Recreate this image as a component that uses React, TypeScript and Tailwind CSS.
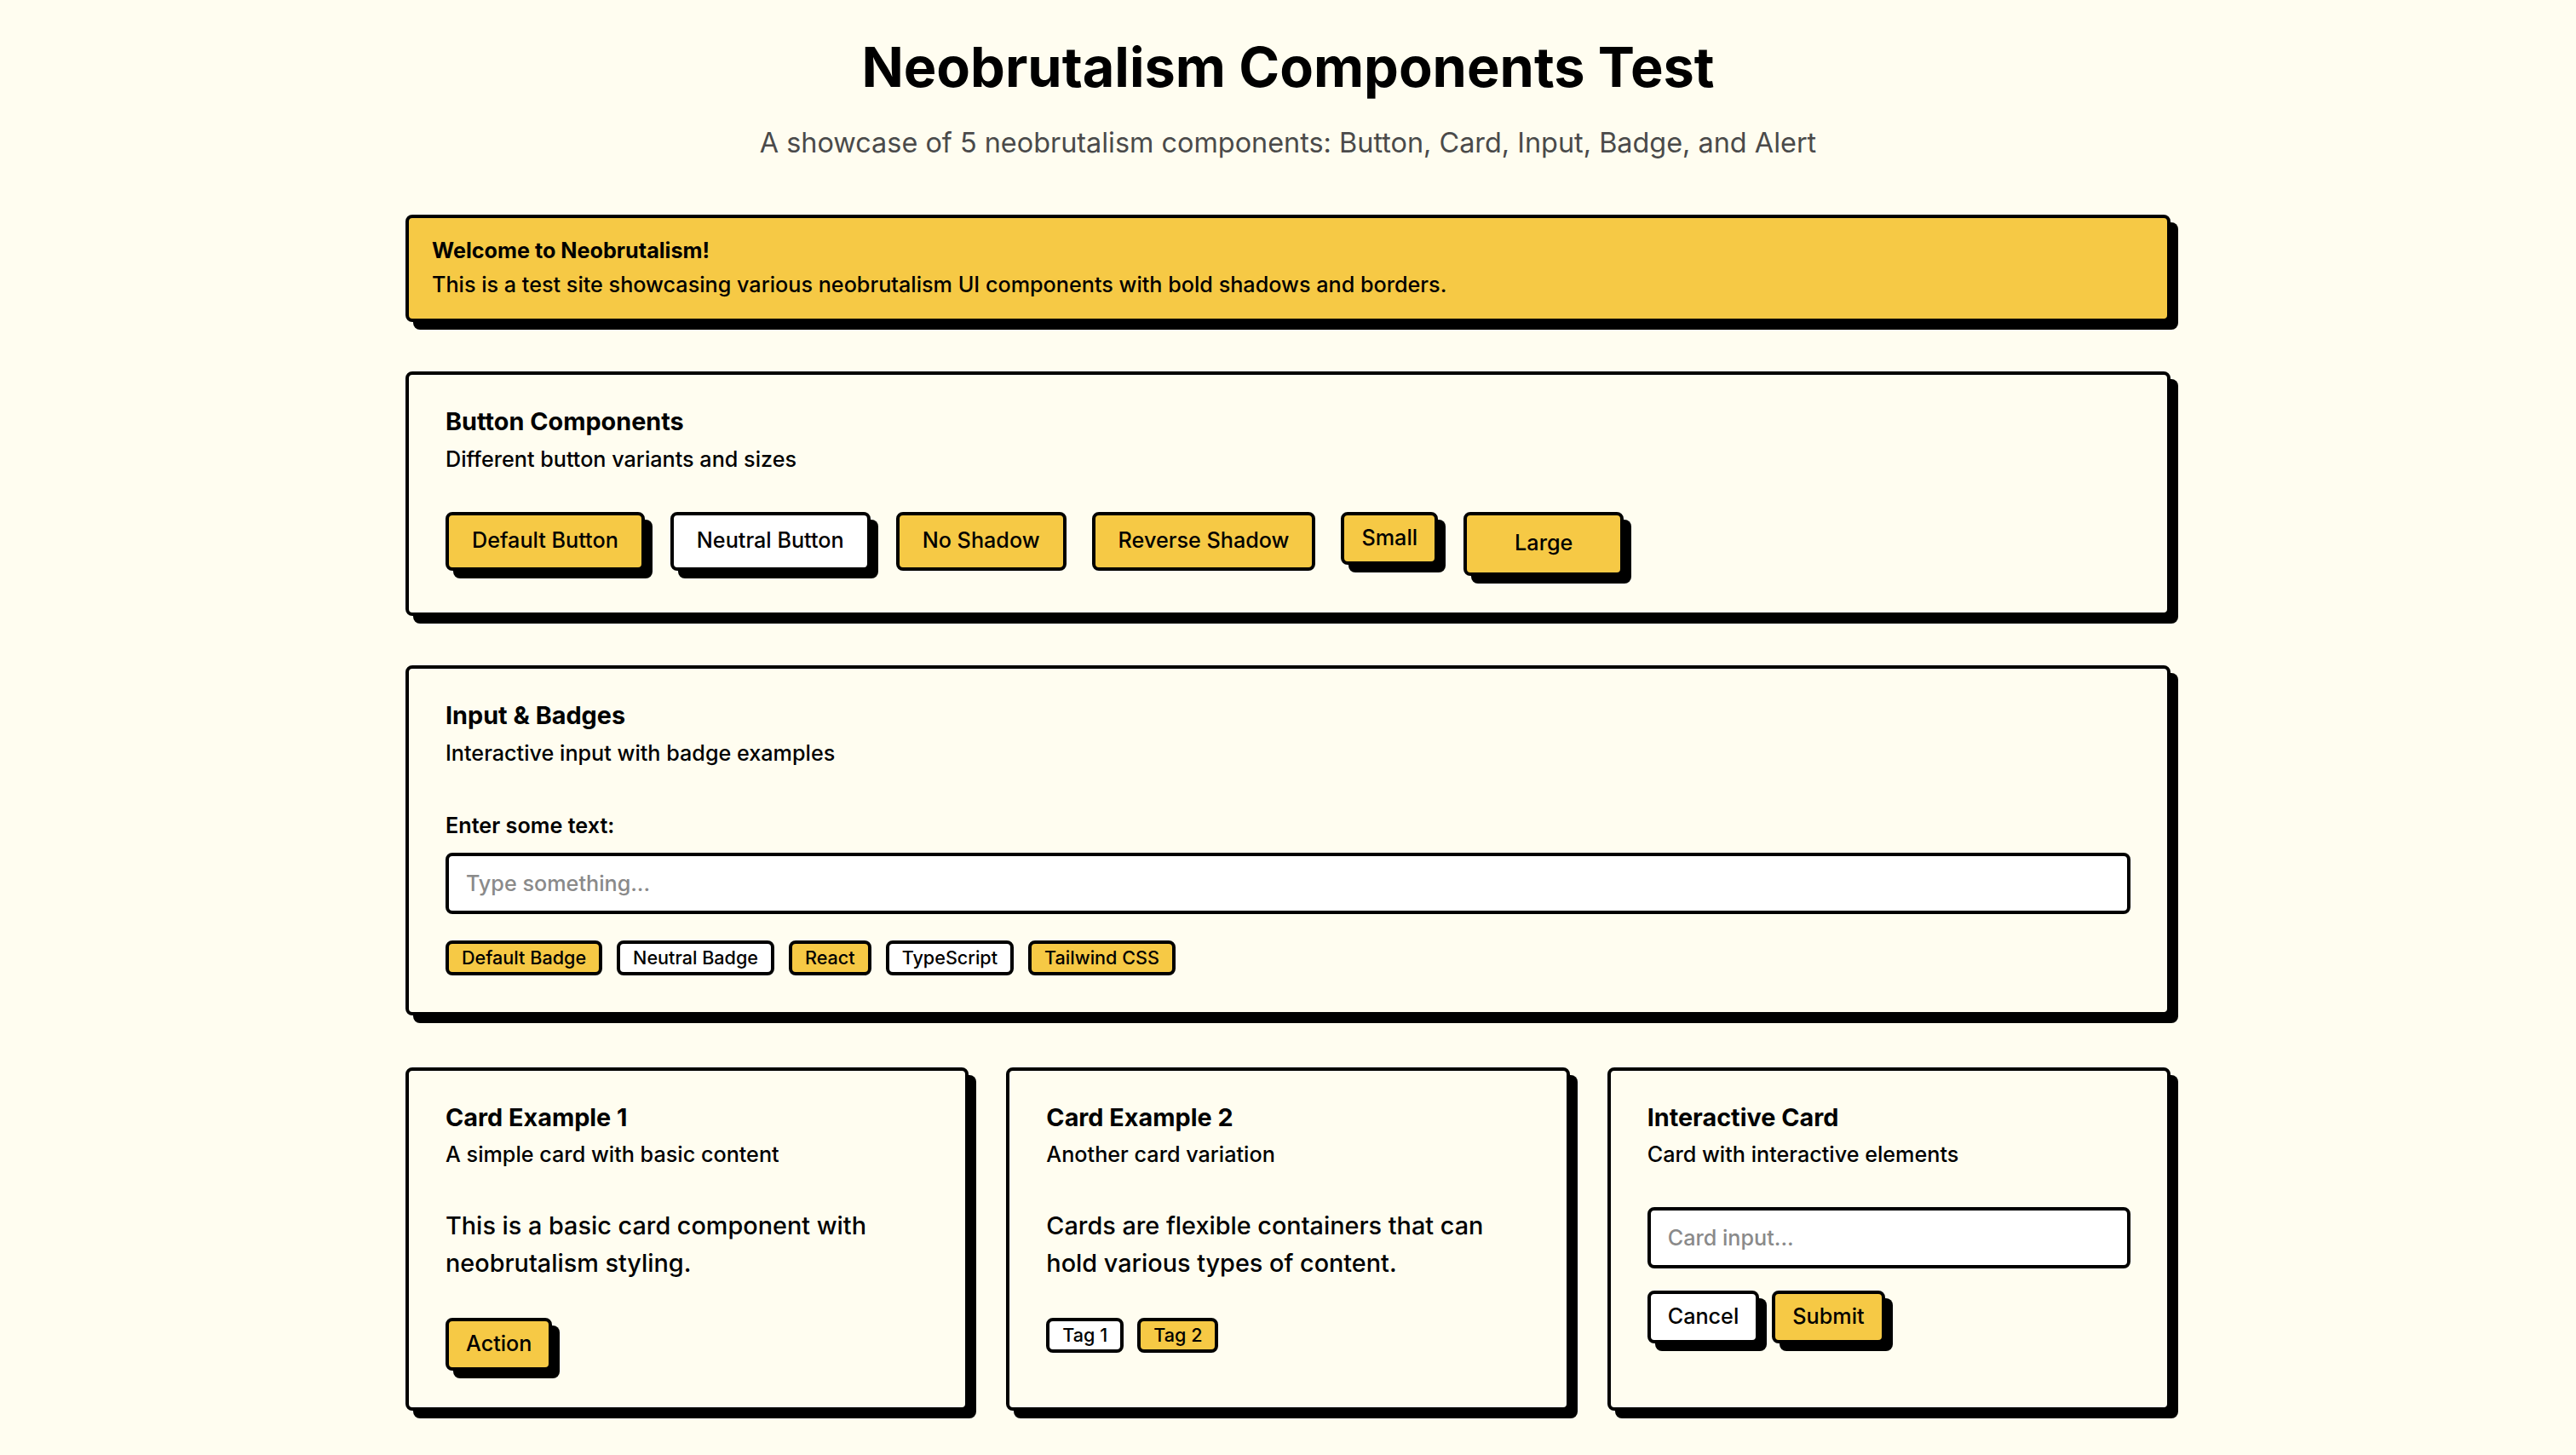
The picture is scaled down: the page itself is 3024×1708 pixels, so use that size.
import React from 'react';

type Variant = 'default' | 'neutral' | 'noShadow' | 'reverse';
type Size = 'sm' | 'md' | 'lg';

const variantClass: Record<Variant, string> = {
  default: 'bg-[#f6c945] shadow-[9px_9px_0px_0px_#000]',
  neutral: 'bg-white shadow-[9px_9px_0px_0px_#000]',
  noShadow: 'bg-[#f6c945]',
  reverse: 'bg-[#f6c945]',
};

const sizeClass: Record<Size, string> = {
  sm: 'h-[62px] px-[20px]',
  md: 'h-[69px] px-[27px]',
  lg: 'h-[75px] px-[56px]',
};

const Button: React.FC<{ variant?: Variant; size?: Size; children: React.ReactNode }> = ({
  variant = 'default',
  size = 'md',
  children,
}) => (
  <button
    className={`${variantClass[variant]} ${sizeClass[size]} inline-flex shrink-0 items-center justify-center rounded-[8px] border-[4px] border-black text-[25.2px] font-medium text-black`}
  >
    {children}
  </button>
);

const Badge: React.FC<{ neutral?: boolean; children: React.ReactNode }> = ({ neutral, children }) => (
  <span
    className={`${neutral ? 'bg-white' : 'bg-[#f6c945]'} inline-flex h-[41px] items-center rounded-[8px] border-[4px] border-black px-[15px] text-[21.6px] font-medium text-black`}
  >
    {children}
  </span>
);

const Input: React.FC<{ placeholder: string }> = ({ placeholder }) => (
  <input
    placeholder={placeholder}
    className="h-[72px] w-full rounded-[8px] border-[4px] border-black bg-white px-[20px] text-[25.2px] font-medium text-black outline-none placeholder:text-[#8a8a8a]"
  />
);

const Card: React.FC<{ title: string; description: string; children: React.ReactNode }> = ({
  title,
  description,
  children,
}) => (
  <div className="rounded-[8px] border-[4px] border-black bg-[#fffdf0] px-[43px] pt-[41px] pb-[43px] shadow-[9px_9px_0px_0px_#000]">
    <h2 className="text-[28.8px] leading-none font-bold text-black">{title}</h2>
    <p className="mt-[11px] text-[25.2px] leading-[36px] font-medium text-black">{description}</p>
    <div className="mt-[44px]">{children}</div>
  </div>
);

const App: React.FC = () => {
  return (
    <div className="min-h-screen bg-[#fffdf0] font-['Inter',sans-serif] text-black">
      <div className="mx-auto w-[2072px] pt-[43px] pb-[60px]">
        {/* Header */}
        <h1 className="text-center text-[64.8px] leading-[72px] font-bold">Neobrutalism Components Test</h1>
        <p className="mt-[28px] text-center text-[32.4px] leading-[50px] text-[#4a4a4a]">
          A showcase of 5 neobrutalism components: Button, Card, Input, Badge, and Alert
        </p>

        <div className="mt-[59px] flex flex-col gap-[58px]">
          {/* Alert */}
          <div className="rounded-[8px] border-[4px] border-black bg-[#f6c945] px-[27px] pt-[20px] pb-[22px] shadow-[9px_9px_0px_0px_#000]">
            <p className="text-[25.2px] leading-[36px] font-bold">Welcome to Neobrutalism!</p>
            <p className="mt-[4px] text-[25.2px] leading-[36px] font-medium">
              This is a test site showcasing various neobrutalism UI components with bold shadows and borders.
            </p>
          </div>

          {/* Buttons */}
          <Card title="Button Components" description="Different button variants and sizes">
            <div className="flex flex-wrap items-start gap-[30px]">
              <Button>Default Button</Button>
              <Button variant="neutral">Neutral Button</Button>
              <Button variant="noShadow">No Shadow</Button>
              <Button variant="reverse">Reverse Shadow</Button>
              <Button size="sm">Small</Button>
              <Button size="lg">Large</Button>
            </div>
          </Card>

          {/* Input & badges */}
          <Card title="Input & Badges" description="Interactive input with badge examples">
            <label className="block pt-[5px] text-[25.2px] leading-[36px] font-semibold">Enter some text:</label>
            <div className="mt-[14px]">
              <Input placeholder="Type something..." />
            </div>
            <div className="mt-[31px] flex flex-wrap gap-[17px]">
              <Badge>Default Badge</Badge>
              <Badge neutral>Neutral Badge</Badge>
              <Badge>React</Badge>
              <Badge neutral>TypeScript</Badge>
              <Badge>Tailwind CSS</Badge>
            </div>
          </Card>

          {/* Card grid */}
          <div className="mt-[3px] grid grid-cols-3 gap-[44px]">
            <Card title="Card Example 1" description="A simple card with basic content">
              <p className="text-[28.8px] leading-[43.2px] font-medium">
                This is a basic card component with neobrutalism styling.
              </p>
              <div className="mt-[43px]">
                <Button size="sm">Action</Button>
              </div>
            </Card>
            <Card title="Card Example 2" description="Another card variation">
              <p className="text-[28.8px] leading-[43.2px] font-medium">
                Cards are flexible containers that can hold various types of content.
              </p>
              <div className="mt-[43px] flex gap-[16px]">
                <Badge neutral>Tag 1</Badge>
                <Badge>Tag 2</Badge>
              </div>
            </Card>
            <Card title="Interactive Card" description="Card with interactive elements">
              <Input placeholder="Card input..." />
              <div className="mt-[26px] flex gap-[15px]">
                <Button variant="neutral" size="sm">Cancel</Button>
                <Button size="sm">Submit</Button>
              </div>
            </Card>
          </div>
        </div>
      </div>
    </div>
  );
};

export default App;
